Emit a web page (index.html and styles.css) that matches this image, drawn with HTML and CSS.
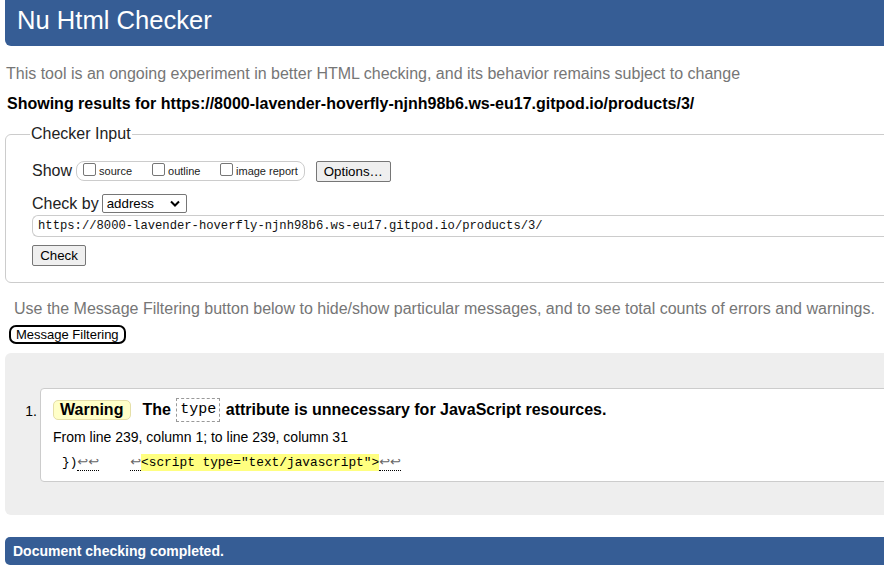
FILE: index.html
```html
<!DOCTYPE html>
<html>
<head>
<meta charset="utf-8">
<title>Nu Html Checker</title>
<link rel="stylesheet" href="styles.css">
</head>
<body>
<h1 class="title">Nu Html Checker</h1>
<p class="tagline">This tool is an ongoing experiment in better HTML checking, and its behavior remains subject to change</p>
<p class="results-for">Showing results for https://8000-lavender-hoverfly-njnh98b6.ws-eu17.gitpod.io/products/3/</p>
<fieldset class="input">
  <legend>Checker Input</legend>
  <div class="row show-row">
    <span class="lbl">Show</span>
    <span class="opts">
      <label class="opt opt-source"><span class="cb"></span>source</label>
      <label class="opt opt-outline"><span class="cb"></span>outline</label>
      <label class="opt"><span class="cb"></span>image report</label>
    </span>
    <span class="btn options">Options…</span>
  </div>
  <div class="row by-row">
    <span class="lbl">Check by</span>
    <span class="select">address<svg class="chev" width="10" height="7" viewBox="0 0 10 7"><path d="M1 1.5 L5 5.5 L9 1.5" fill="none" stroke="#000" stroke-width="2"/></svg></span>
  </div>
  <div class="url">https://8000-lavender-hoverfly-njnh98b6.ws-eu17.gitpod.io/products/3/</div>
  <span class="btn check">Check</span>
</fieldset>
<p class="filter-note">Use the Message Filtering button below to hide/show particular messages, and to see total counts of errors and warnings.</p>
<span class="filter-btn">Message Filtering</span>
<div class="results">
  <ol class="msgs">
    <li class="msg">
      <span class="num">1.</span>
      <div class="card">
        <p class="head"><span class="badge">Warning</span><span class="msgtext">The <code class="attr">type</code> attribute is unnecessary for JavaScript resources.</span></p>
        <p class="loc">From line 239, column 1; to line 239, column 31</p>
        <p class="extract"><span class="pre">})</span><span class="lb">↩↩</span><span class="gap"></span><span class="lb">↩</span><b>&lt;script type="text/javascript"&gt;</b><span class="lb">↩↩</span></p>
      </div>
    </li>
  </ol>
</div>
<div class="done">Document checking completed.</div>
</body>
</html>
```
FILE: styles.css
```css
html { overflow: hidden; }
body {
  margin: 0;
  width: 1100px;
  font-family: "Liberation Sans", Arial, sans-serif;
  color: #000;
  background: #fff;
}
.title {
  margin: 0 0 0 5px;
  height: 46px;
  background: #365d95;
  color: #fff;
  font-weight: normal;
  font-size: 25.6px;
  line-height: 40px;
  padding-left: 12px;
  border-radius: 0 0 0 6px;
  box-sizing: border-box;
}
.tagline {
  margin: 17px 0 0 6px;
  font-size: 16px;
  line-height: 22px;
  color: #767676;
}
.results-for {
  margin: 8px 0 0 7px;
  font-size: 16px;
  font-weight: bold;
  line-height: 22px;
}
.input {
  margin: 10px 0 0 5px;
  padding: 17px 0 16px 26px;
  border: 1px solid #ccc;
  border-radius: 6px;
  width: 1000px;
  box-sizing: border-box;
}
.input legend {
  font-size: 16px;
  padding: 0 1px;
  margin-left: -2px;
  color: #222;
}
.row {
  display: flex;
  align-items: center;
}
.lbl {
  font-size: 16px;
  color: #222;
}
.show-row { height: 22px; }
.opts {
  display: flex;
  align-items: center;
  margin-left: 4px;
  height: 20px;
  border: 1px solid #ccc;
  border-radius: 8px;
  padding: 0 6px 0 6px;
  box-sizing: border-box;
}
.opt {
  display: flex;
  align-items: center;
  font-size: 11px;
  color: #222;
  line-height: 13px;
}
.opt-source { width: 69px; }
.opt-outline { width: 68px; }
.cb {
  width: 11px;
  height: 11px;
  border: 1px solid #767676;
  border-radius: 2px;
  margin-right: 3px;
  margin-top: -3px;
  background: #fff;
}
.btn {
  display: inline-flex;
  align-items: center;
  justify-content: center;
  background: #efefef;
  border: 1px solid #767676;
  border-radius: 2px;
  font-size: 13.3px;
  color: #000;
  box-sizing: border-box;
  height: 21px;
}
.options {
  margin-left: 11px;
  width: 75px;
}
.by-row { margin-top: 11px; height: 21px; }
.select {
  display: inline-flex;
  align-items: center;
  justify-content: space-between;
  margin-left: 3px;
  width: 85px;
  height: 19px;
  border: 1px solid #767676;
  border-radius: 2px;
  box-sizing: border-box;
  font-size: 13.3px;
  padding: 0 6px 0 4px;
}
.chev { display: block; }
.url {
  margin-top: 1px;
  height: 22px;
  border: 1px solid #ccc;
  border-right: none;
  border-radius: 6px 0 0 6px;
  font-family: "Liberation Mono", "DejaVu Sans Mono", monospace;
  font-size: 12.2px;
  line-height: 20px;
  padding-left: 5px;
  box-sizing: border-box;
  color: #111;
}
.check {
  margin-top: 8px;
  width: 54px;
}
.filter-note {
  margin: 15px 0 0 14px;
  font-size: 16px;
  line-height: 22px;
  color: #767676;
}
.filter-btn {
  display: inline-block;
  margin: 5px 0 0 9px;
  font-size: 13px;
  line-height: 15px;
  padding: 0 5px;
  border: 2px solid #000;
  border-radius: 7px;
}
.results {
  margin: 9px 0 0 5px;
  background: #eee;
  border-radius: 6px;
  padding: 35px 0 33px 0;
}
.msgs {
  list-style: none;
  margin: 0;
  padding: 0;
}
.msg {
  display: flex;
  align-items: flex-start;
}
.num {
  width: 35px;
  text-align: right;
  font-size: 14px;
  margin-top: 15px;
  box-sizing: border-box;
  padding-right: 3px;
}
.card {
  flex: 1;
  background: #fff;
  border: 1px solid #ccc;
  border-radius: 4px;
  padding: 9px 12px 10px 12px;
}
.card p { margin: 0; }
.head {
  display: flex;
  align-items: center;
  font-size: 16px;
  font-weight: bold;
  height: 24px;
}
.badge {
  display: inline-block;
  background: #ffffc8;
  border: 1px solid #e5dfa8;
  border-radius: 5px;
  padding: 0 7px 0 6px;
  line-height: 18px;
  margin-right: 11px;
}
.msgtext { display: inline-flex; align-items: center; white-space: pre; }
.attr {
  font-family: "Liberation Mono", "DejaVu Sans Mono", monospace;
  font-weight: normal;
  font-size: 15px;
  border: 1px dashed #999;
  padding: 1px 3px;
  margin: 0 1px;
  line-height: 20px;
}
.loc {
  margin-top: 5px !important;
  font-size: 14px;
  line-height: 20px;
}
.extract {
  margin-top: 7px !important;
  font-family: "Liberation Mono", "DejaVu Sans Mono", monospace;
  font-size: 12.8px;
  line-height: 17px;
  padding-left: 9px;
  display: flex;
  align-items: flex-end;
}
.pre { white-space: pre; }
.lb {
  border-bottom: 1px dotted #000;
  white-space: pre;
  color: #666;
  font-family: "DejaVu Sans", sans-serif;
  font-size: 13px;
  line-height: 16px;
}
.gap { width: 31px; }
.extract b {
  font-weight: normal;
  background: #ffff80;
}
.done {
  margin: 22px 0 0 5px;
  background: #365d95;
  color: #fff;
  font-size: 14px;
  font-weight: bold;
  height: 28px;
  line-height: 28px;
  padding-left: 8px;
  border-radius: 5px 0 0 5px;
}
```
